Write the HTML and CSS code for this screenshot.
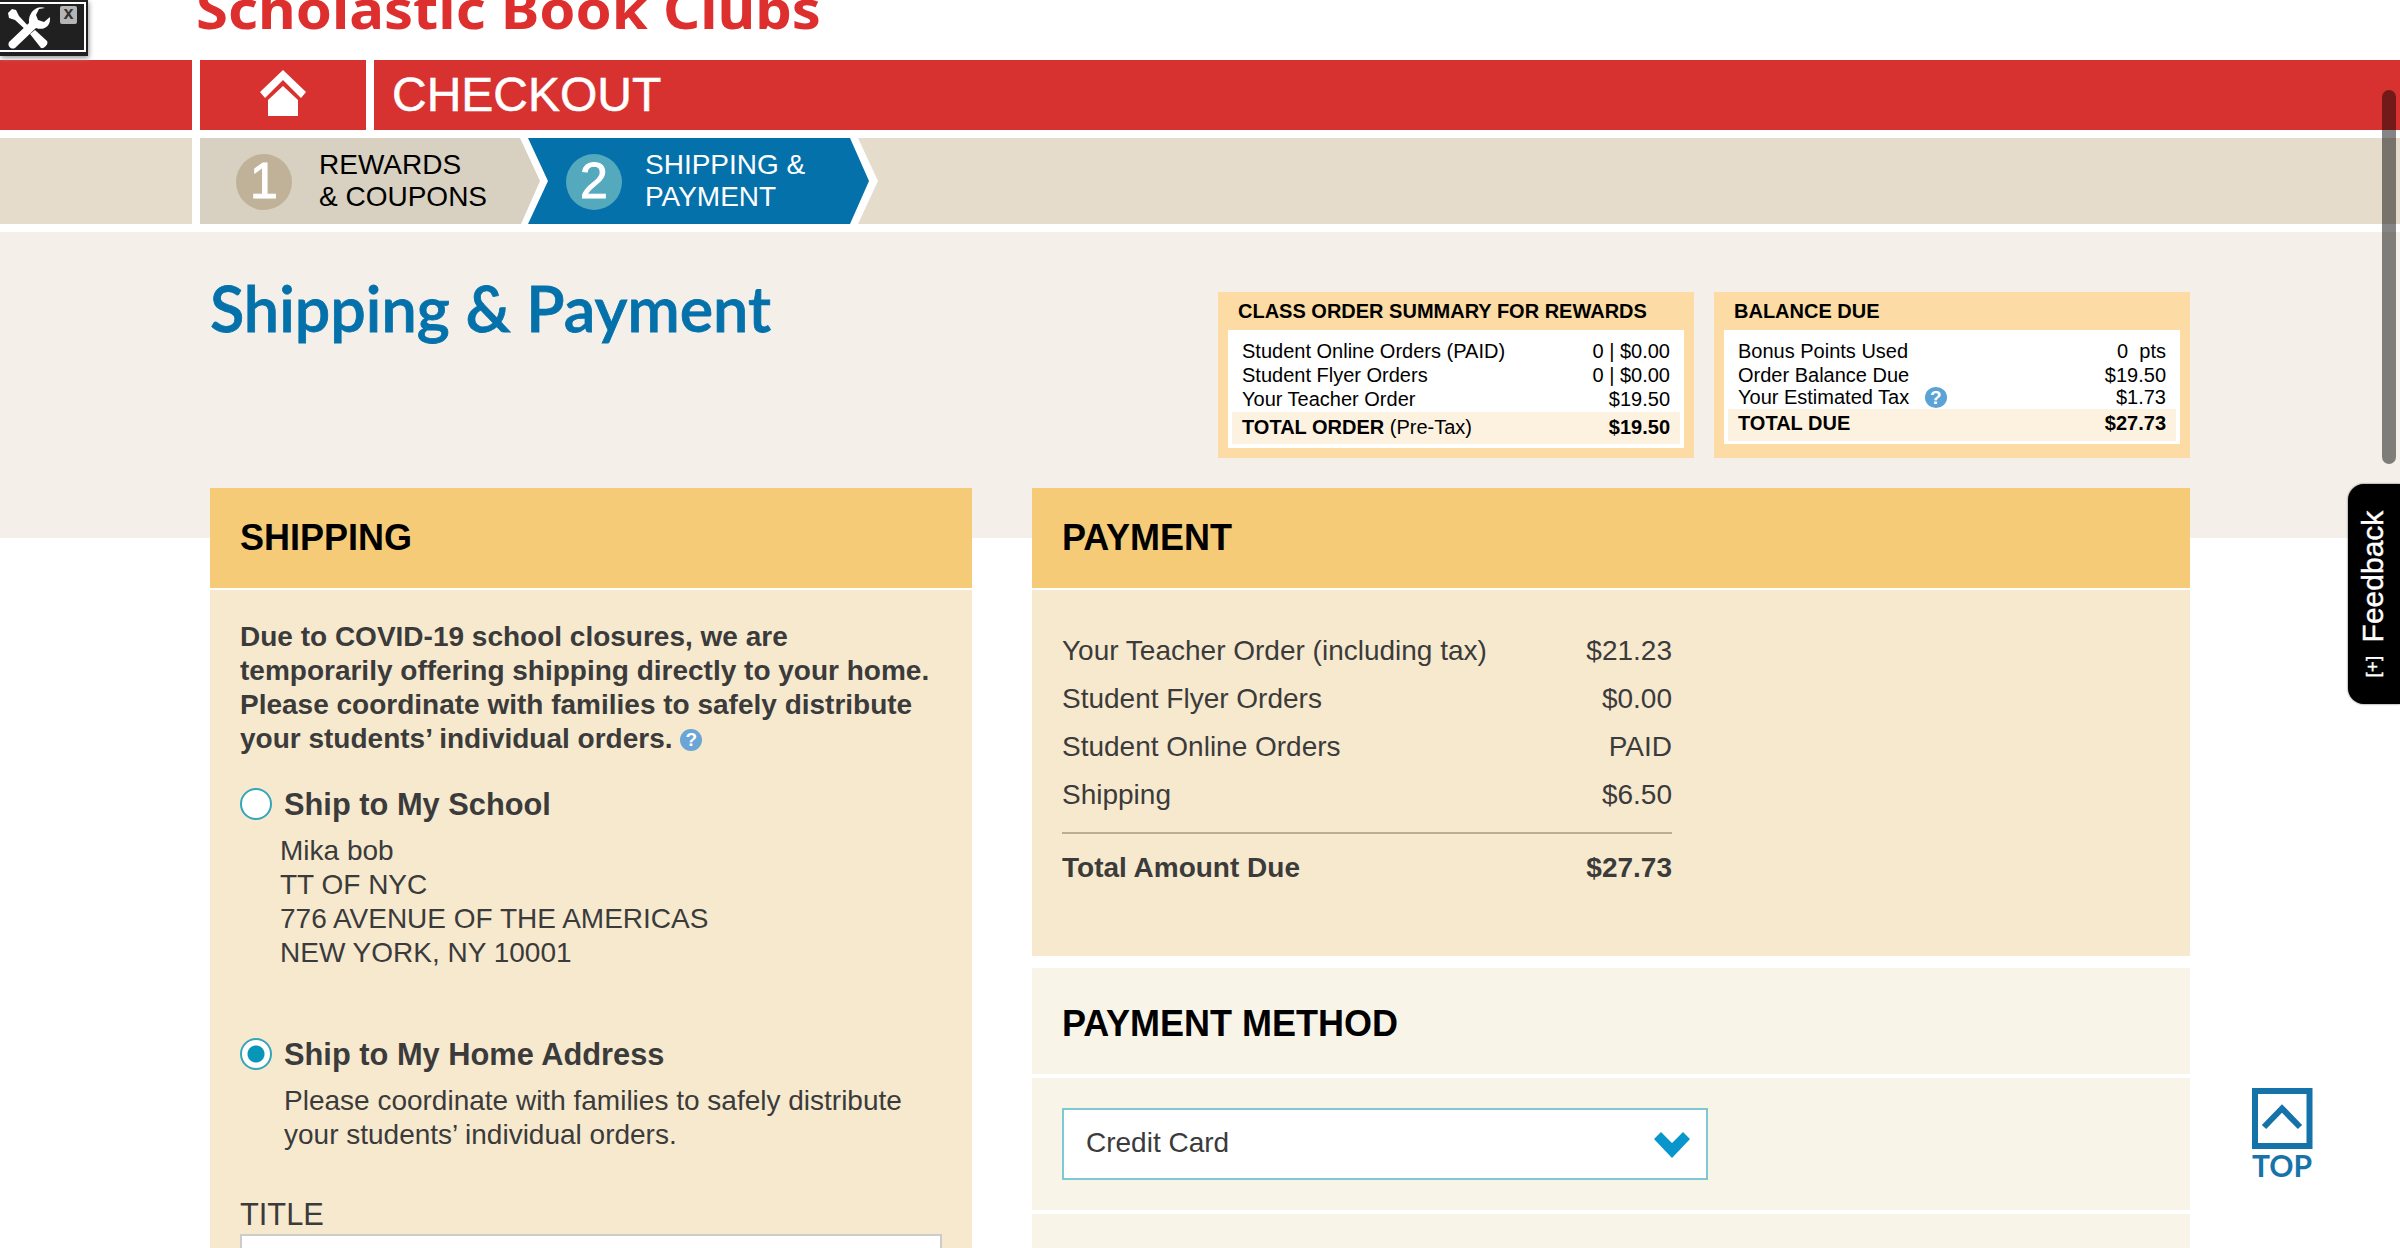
FILE: index.html
```html
<!DOCTYPE html>
<html lang="en">
<head>
<meta charset="utf-8">
<title>Checkout - Shipping &amp; Payment</title>
<link rel="stylesheet" href="styles.css">
</head>
<body>
<div class="page">
  <header class="masthead"><svg class="brand" viewBox="0 0 640 44"><text x="-1" y="29" textLength="625" lengthAdjust="spacingAndGlyphs">Scholastic Book Clubs</text></svg></header>
  <nav class="titlebar">
    <div class="bar-edge"></div>
    <a class="home"><svg width="48" height="48" viewBox="0 0 48 48"><path fill="#fff" d="M24 1 47 23l-5 6L24 11 6 29l-5-6z"/><path fill="#fff" d="M24 17 39 31v16H9V31z"/></svg></a>
    <h1 class="bar-title">CHECKOUT</h1>
  </nav>
  <nav class="steps">
    <div class="step-edge"></div>
    <div class="step-track">
      <svg class="step-shapes" viewBox="0 0 680 86"><path fill="#d8d0c0" d="M0 0h322l20 43-20 43H0z"/><path fill="#fff" d="M320 0h9l19 43-19 43h-8l19-43z"/><path fill="#0471ab" d="M328 0h323l19 43-19 43H328l20-43z"/><path fill="#fff" d="M650 0h8l20 43-20 43h-8l19-43z"/></svg>
      <div class="step step-one"><span class="num">1</span><span class="step-name">REWARDS<br>&amp; COUPONS</span></div>
      <div class="step step-two"><span class="num">2</span><span class="step-name">SHIPPING &amp;<br>PAYMENT</span></div>
    </div>
  </nav>
  <section class="intro">
    <h2 class="page-title"><svg width="570" height="90" viewBox="0 0 570 90"><text x="0" y="52" textLength="561" lengthAdjust="spacingAndGlyphs">Shipping &amp; Payment</text></svg></h2>
    <div class="summary">
      <h3>CLASS ORDER SUMMARY FOR REWARDS</h3>
      <div class="summary-body">
        <div class="line"><span>Student Online Orders (PAID)</span><span>0 | $0.00</span></div>
        <div class="line"><span>Student Flyer Orders</span><span>0 | $0.00</span></div>
        <div class="line"><span>Your Teacher Order</span><span>$19.50</span></div>
        <div class="line sum"><span><b>TOTAL ORDER</b> (Pre-Tax)</span><b>$19.50</b></div>
      </div>
    </div>
    <div class="summary balance">
      <h3>BALANCE DUE</h3>
      <div class="summary-body">
        <div class="line"><span>Bonus Points Used</span><span>0 &nbsp;pts</span></div>
        <div class="line"><span>Order Balance Due</span><span>$19.50</span></div>
        <div class="line tax"><span>Your Estimated Tax <i class="help tax-help">?</i></span><span>$1.73</span></div>
        <div class="line sum"><b>TOTAL DUE</b><b>$27.73</b></div>
      </div>
    </div>
  </section>
  <main class="columns">
    <section class="shipping">
      <h2 class="panel-head">SHIPPING</h2>
      <div class="shipping-body">
        <p class="notice">Due to COVID-19 school closures, we are<br>temporarily offering shipping directly to your home.<br>Please coordinate with families to safely distribute<br>your students’ individual orders. <i class="help">?</i></p>
        <div class="choice"><span class="radio"></span>Ship to My School</div>
        <p class="address">Mika bob<br>TT OF NYC<br>776 AVENUE OF THE AMERICAS<br>NEW YORK, NY 10001</p>
        <div class="choice"><span class="radio on"></span>Ship to My Home Address</div>
        <p class="hint">Please coordinate with families to safely distribute<br>your students’ individual orders.</p>
        <div class="field-label">TITLE</div>
        <div class="field"></div>
      </div>
    </section>
    <section class="payment">
      <h2 class="panel-head">PAYMENT</h2>
      <div class="payment-body">
        <div class="amounts">
          <div class="row"><span>Your Teacher Order (including tax)</span><span>$21.23</span></div>
          <div class="row"><span>Student Flyer Orders</span><span>$0.00</span></div>
          <div class="row"><span>Student Online Orders</span><span>PAID</span></div>
          <div class="row"><span>Shipping</span><span>$6.50</span></div>
          <div class="row due"><span>Total Amount Due</span><span>$27.73</span></div>
        </div>
      </div>
      <h2 class="method-head">PAYMENT METHOD</h2>
      <div class="method-body">
        <div class="select"><span>Credit Card</span><svg width="38" height="28" viewBox="0 0 38 28"><path fill="#0896cc" d="M1 8 8 1 19 12 30 1l7 7L19 27z"/></svg></div>
      </div>
      <div class="method-next"></div>
    </section>
  </main>
</div>
<div class="tools"><div class="tools-frame"><svg width="58" height="46" viewBox="0 4 58 46"><path fill="#fff" d="M8 13l4-4 4 1 3 6 11 12-3 3L15 20l-6-2z"/><path fill="#fff" d="M45 8l-6 1-3 6 2 5 6 2 6-5c1 9-6 14-14 11L15 48c-4 2-8-2-6-6l20-19C28 13 36 5 45 8z"/><path fill="#fff" d="M30 34l5-4 12 11c2 3-3 8-6 7z"/></svg><span class="tools-close">x</span></div></div>
<div class="scroll-thumb"></div>
<div class="feedback"><span class="feedback-text"><small>[+]</small>Feedback</span></div>
<div class="top-link"><svg width="66" height="92" viewBox="0 0 66 92"><path fill="#fff" stroke="#1673aa" stroke-width="6" d="M5 3h54.500v55h-54.500z"/><path fill="none" stroke="#1673aa" stroke-width="6" d="M14 39 32 20.500 50 39"/><text x="2" y="89" textLength="60">TOP</text></svg></div>
</body>
</html>
```
FILE: styles.css
```css
* { box-sizing: border-box; }
body { margin: 0; background: #fff; font-family: "Liberation Sans", Arial, sans-serif; color: #000; }
h1, h2, h3, p { margin: 0; }
.page { height: 1248px; overflow: hidden; }
.masthead { height: 60px; padding-left: 197px; }
.brand { display: block; width: 640px; height: 44px; overflow: hidden; }
.brand text { font: bold 54px "Noto Sans", sans-serif; fill: #dd2f2e; }
.titlebar { display: flex; gap: 8px; height: 70px; margin-bottom: 8px; }
.titlebar > * { background: #d83230; }
.bar-edge, .step-edge { width: 192px; flex: none; }
.home { width: 166px; display: flex; align-items: center; justify-content: center; padding-bottom: 4px; }
.bar-title { flex: 1; padding-left: 18px; color: #fff; font-size: 48px; line-height: 70px; font-weight: 400; -webkit-text-stroke: .5px #fff; }
.steps { display: flex; gap: 8px; height: 86px; margin-bottom: 8px; }
.step-edge, .step-track { background: #e5dccb; }
.step-track { flex: 1; position: relative; display: flex; }
.step-shapes { position: absolute; left: 0; top: 0; width: 680px; height: 86px; }
.step { position: relative; display: flex; align-items: center; font-size: 28px; line-height: 32px; }
.step-one { width: 329px; padding-left: 36px; gap: 27px; }
.step-two { padding-left: 37px; gap: 23px; color: #fff; }
.step-name { padding-bottom: 1px; }
.num { width: 56px; height: 56px; border-radius: 50%; background: #c0b199; color: #fff; font-size: 50px; line-height: 54px; text-align: center; margin-top: 2px; -webkit-text-stroke: 1px #fff; }
.step-two .num { background: #55a9bd; }
.intro { height: 306px; background: #f4f0e9; padding: 60px 210px 0; display: flex; align-items: flex-start; gap: 20px; }
.page-title { margin: -12px auto 0 0; height: 90px; }
.page-title text { font: 600 64px Lato, sans-serif; fill: #0471ab; stroke: #0471ab; stroke-width: .8px; }
.summary { width: 476px; height: 166px; background: #fcdca4; padding: 0 10px; font-size: 20px; }
.summary h3 { font-size: 20px; line-height: 38px; padding-left: 10px; white-space: nowrap; }
.summary-body { background: #fff; height: 118px; padding: 9px 4px 4px; }
.balance .summary-body { height: 114px; }
.line { display: flex; justify-content: space-between; line-height: 24px; padding: 0 10px; white-space: pre; }
.sum { background: #fdf2e0; height: 32px; line-height: 31px; margin-top: 1px; }
.balance .line:nth-child(3) { line-height: 20px; }
.balance .sum { line-height: 28px; }
.help { display: inline-block; width: 22px; height: 22px; border-radius: 50%; background: #6aa5d6; color: #fff; font: bold 19px/22px "Liberation Sans", Arial, sans-serif; text-align: center; vertical-align: 0; position: relative; top: -2px; }
.tax-help { margin-left: 10px; height: 21px; line-height: 21px; top: 0; background: #5ba2d6; }
.columns { display: flex; justify-content: space-between; padding: 0 210px; margin-top: -50px; color: #3b3b3b; }
.shipping { width: 762px; }
.payment { width: 1158px; }
.panel-head { position: relative; height: 100px; margin-bottom: 2px; padding-left: 30px; line-height: 100px; font-size: 36px; background: #f5cb77; color: #000; }
.shipping-body { background: #f7e9ce; height: 700px; padding: 30px 30px 0; font-size: 28px; line-height: 34px; }
.notice { font-weight: bold; height: 165px; white-space: nowrap; }
.choice { display: flex; align-items: center; gap: 12px; font-weight: bold; font-size: 30.800px; height: 40px; }
.radio { width: 32px; height: 32px; border: 2px solid #35a5ba; border-radius: 50%; background: #fff; margin-top: -2px; }
.radio.on { background: radial-gradient(circle, #0896b8 0 8px, #fff 9px); }
.address { padding: 9px 0 0 40px; height: 210px; }
.hint { padding: 9px 0 0 44px; height: 123px; white-space: nowrap; }
.field-label { font-size: 30.800px; line-height: 34px; height: 36px; }
.field { width: 702px; height: 60px; background: #fff; border: 2px solid #ccc; }
.payment-body { height: 366px; background: #f7e9ce; padding: 37px 30px 0; margin-bottom: 12px; }
.amounts { width: 610px; font-size: 28px; }
.row { display: flex; justify-content: space-between; line-height: 48px; }
.due { margin-top: 13px; border-top: 2px solid #b8ae94; padding-top: 10px; font-weight: bold; }
.method-head { height: 106px; margin-bottom: 4px; background: #f9f4e8; color: #000; font-size: 36px; line-height: 112px; padding-left: 30px; }
.method-body { height: 132px; margin-bottom: 4px; background: #f9f4e8; padding: 30px; }
.select { width: 646px; height: 72px; border: 2px solid #7fc8d5; background: #fff; display: flex; align-items: center; justify-content: space-between; padding: 0 15px 3px 22px; font-size: 28px; }
.select svg { margin-top: 4px; }
.method-next { height: 60px; background: #f9f4e8; }
.tools { position: absolute; left: 0; top: 0; width: 88px; height: 56px; background: #202020; padding: 2px 2px 4px 0; box-shadow: 1px 2px 5px #999; }
.tools-frame { position: relative; height: 50px; border: 2px solid #fff; border-left: 0; background: #202020; }
.tools-frame svg { display: block; }
.tools-close { position: absolute; right: 7px; top: 2px; width: 17px; height: 18px; background: #b5b5b5; color: #333; font: bold 18px/15px "Liberation Sans", sans-serif; text-align: center; border-radius: 2px; }
.scroll-thumb { position: absolute; right: 4px; top: 90px; width: 14px; height: 374px; border-radius: 7px; background: rgba(0,0,0,.48); }
.feedback { position: absolute; right: 0; top: 484px; width: 52px; height: 220px; border-radius: 16px 0 0 16px; background: #000; color: #fff; box-shadow: 0 0 2px #444; display: flex; align-items: center; justify-content: center; padding-right: 2px; }
.feedback-text { writing-mode: vertical-rl; transform: rotate(180deg); font-size: 30px; line-height: 30px; display: flex; gap: 13px; align-items: center; -webkit-text-stroke: .4px #fff; }
.feedback small { font-size: 19px; line-height: 20px; }
.top-link { position: absolute; left: 2250px; top: 1088px; width: 66px; height: 92px; }
.top-link text { font: bold 30px Lato, sans-serif; fill: #1673aa; }
```
